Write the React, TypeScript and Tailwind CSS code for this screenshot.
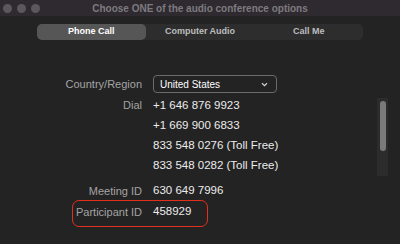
const labelCls = "w-[142px] shrink-0 text-right text-[11px] text-[#a3a3a3]";
const valueCls = "text-[11.5px] text-[#ececec]";

const dialNumbers = [
  "+1 646 876 9923",
  "+1 669 900 6833",
  "833 548 0276 (Toll Free)",
  "833 548 0282 (Toll Free)",
];

export default function App() {
  return (
    <div
      className="w-[400px] h-[244px] bg-[#232323] overflow-hidden flex flex-col"
      style={{ fontFamily: '"Liberation Sans", Arial, sans-serif' }}
    >
      {/* title bar */}
      <div className="h-[16px] bg-[#2e2a2f] flex items-center shrink-0">
        <div className="flex gap-[5px] pl-[3px] w-[44px]">
          <span className="w-[9px] h-[9px] rounded-full bg-[#5b575d]" />
          <span className="w-[9px] h-[9px] rounded-full bg-[#5b575d]" />
          <span className="w-[9px] h-[9px] rounded-full bg-[#5b575d]" />
        </div>
        <div className="flex-1 text-center text-[10px] font-bold text-[#7e7a80] pr-[44px]">
          Choose ONE of the audio conference options
        </div>
      </div>

      {/* segmented control */}
      <div className="mt-[8px] ml-[37px] w-[326px] h-[16px] rounded-[5px] bg-[#2d2d2d] flex text-[9px] font-bold text-[#bdbdbd]">
        <div className="flex-1 rounded-[5px] bg-[#565656] text-white flex items-center justify-center">
          Phone Call
        </div>
        <div className="flex-1 flex items-center justify-center">Computer Audio</div>
        <div className="flex-1 flex items-center justify-center">Call Me</div>
      </div>

      {/* form */}
      <div className="mt-[35px] flex flex-col">
        <div className="flex items-center h-[18px] gap-[11px]">
          <div className={labelCls}>Country/Region</div>
          <div className="w-[124px] h-[18px] border border-[#6b6b6b] rounded-[4px] flex items-center justify-between pl-[6px] pr-[8px]">
            <span className="text-[10px] text-white">United States</span>
            <svg width="7" height="5" viewBox="0 0 7 5">
              <path d="M1 1.2 L3.5 3.6 L6 1.2" fill="none" stroke="#d0d0d0" strokeWidth="1.2" />
            </svg>
          </div>
        </div>

        <div className="flex mt-[2px] gap-[11px]">
          <div className={`${labelCls} h-[20px] leading-[20px]`}>Dial</div>
          <div className="flex-1 flex">
            <div className="flex-1 flex flex-col">
              {dialNumbers.map((n) => (
                <div key={n} className={`${valueCls} h-[20px] leading-[20px]`}>
                  {n}
                </div>
              ))}
            </div>
            <div className="w-[11px] mr-[12px] mt-[3px] h-[78px] bg-[#2c2c2c] flex justify-center pt-[3px]">
              <div className="w-[6px] h-[50px] rounded-full bg-[#7a7a7a]" />
            </div>
          </div>
        </div>

        <div className="flex items-center h-[20px] mt-[5px] gap-[11px]">
          <div className={labelCls}>Meeting ID</div>
          <div className={valueCls}>630 649 7996</div>
        </div>

        <div className="flex items-center h-[20px] mt-[1px] gap-[11px] relative">
          <div className={labelCls}>Participant ID</div>
          <div className={valueCls}>458929</div>
          <div className="absolute left-[72px] top-[-2px] w-[136px] h-[27px] border-[1.5px] border-[#e2301c] rounded-[7px]" />
        </div>
      </div>
    </div>
  );
}
